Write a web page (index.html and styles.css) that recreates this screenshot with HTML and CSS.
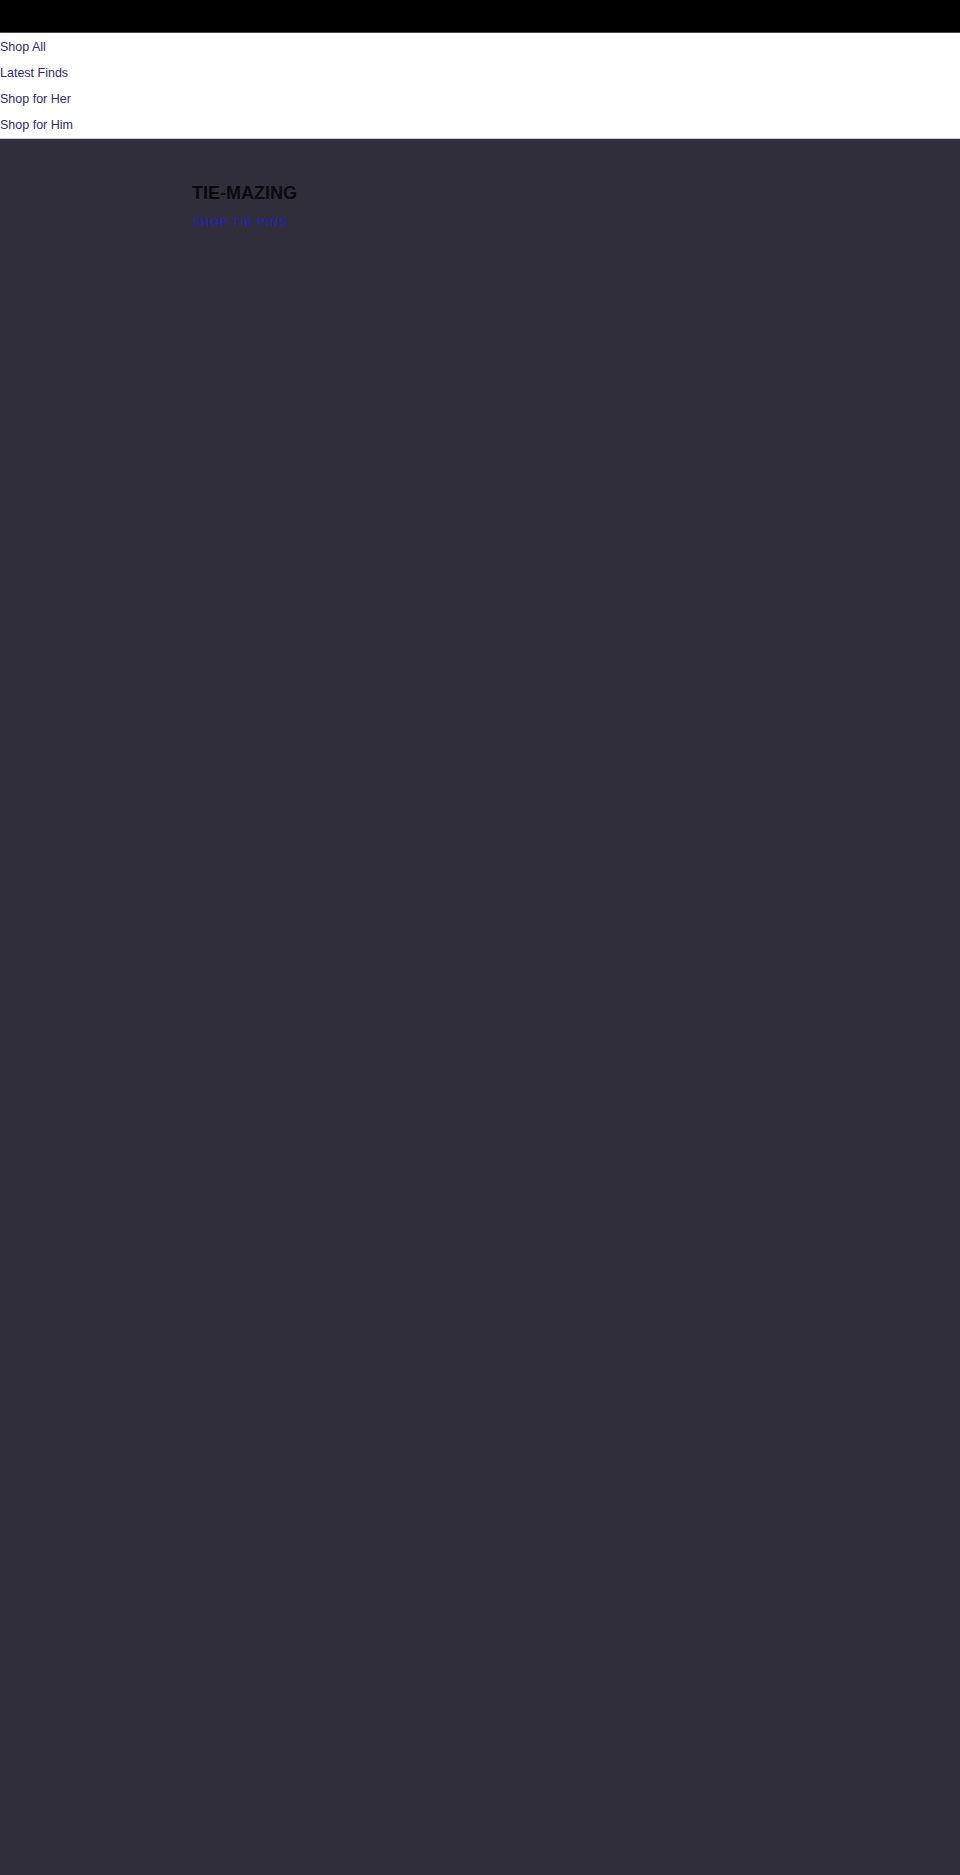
FILE: index.html
```html
<!DOCTYPE html>
<html lang="en">
<head>
<meta charset="utf-8">
<title>Tie-Mazing</title>
<link rel="stylesheet" href="styles.css">
</head>
<body>
<header class="topbar"></header>
<nav class="menu">
  <a class="menu-link" href="#">Shop All</a>
  <a class="menu-link" href="#">Latest Finds</a>
  <a class="menu-link" href="#">Shop for Her</a>
  <a class="menu-link" href="#">Shop for Him</a>
</nav>
<main class="hero">
  <div class="hero-copy">
    <h2 class="hero-title">TIE-MAZING</h2>
    <a class="hero-cta" href="#">SHOP TIE PINS</a>
  </div>
</main>
</body>
</html>
```
FILE: styles.css
```css
html, body {
  margin: 0;
  padding: 0;
}
body {
  font-family: "Liberation Sans", Arial, sans-serif;
  background: #302e3b;
  min-height: 1875px;
  display: flex;
  flex-direction: column;
}
.topbar {
  height: 32px;
  background: #000;
  border-bottom: 1px solid #4a4a4a;
  flex: none;
}
.menu {
  background: #fff;
  display: flex;
  flex-direction: column;
  padding-top: 1px;
  border-bottom: 1px solid #cfcfcf;
  flex: none;
}
.menu-link {
  font-size: 12.5px;
  line-height: 26px;
  color: #2d2a72;
  text-decoration: none;
}
.hero {
  flex: 1;
  background: #302e3b;
  padding: 44px 0 0 192px;
}
.hero-copy {
  display: flex;
  flex-direction: column;
  align-items: flex-start;
  gap: 12px;
}
.hero-title {
  margin: 0;
  font-size: 18px;
  font-weight: 700;
  line-height: 21px;
  color: #0b0b0d;
}
.hero-cta {
  font-size: 11px;
  line-height: 13px;
  letter-spacing: 1.2px;
  color: #2020c8;
  text-decoration: none;
  margin-left: 1px;
}
```
